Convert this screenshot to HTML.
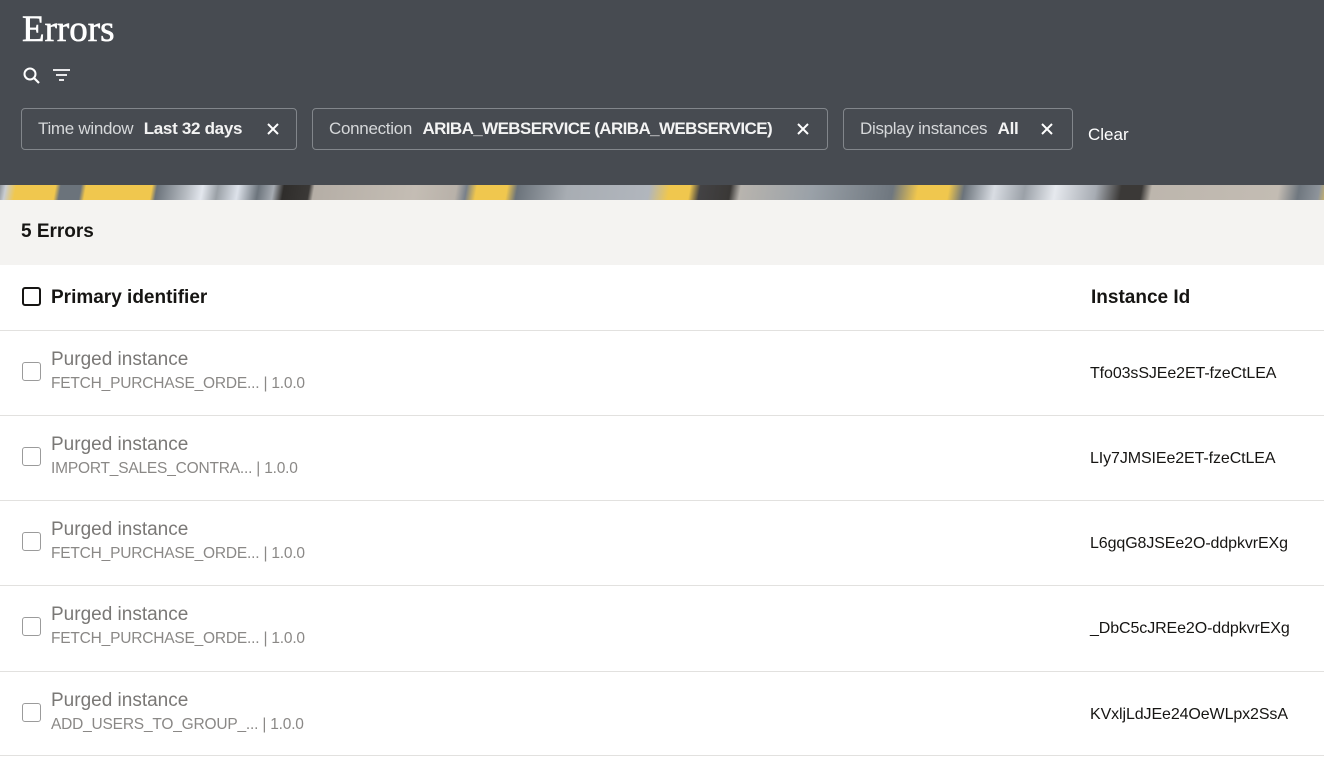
<!DOCTYPE html>
<html><head><meta charset="utf-8"><style>
*{box-sizing:border-box;margin:0;padding:0}
body{width:1324px;height:782px;overflow:hidden;background:#fff;font-family:"Liberation Sans",sans-serif;color:#161513}
.hdr{position:absolute;left:0;top:0;width:1324px;height:185px;background:#474b51}
h1{position:absolute;left:22px;top:8px;font-family:"Liberation Serif",serif;font-weight:normal;font-size:37px;color:#fff;-webkit-text-stroke:0.6px #fff}
.ic{position:absolute;top:66px}
.chip{position:absolute;top:108px;height:42px;border:1px solid #82868b;border-radius:4px;color:#d6d8da;font-size:17px;line-height:40px;padding-left:16px;white-space:nowrap;letter-spacing:-0.3px}
.chip b{color:#f3f3f3;margin-left:6px}
.chip .x{position:absolute;top:12px}
.clear{position:absolute;left:1088px;top:125px;color:#fff;font-size:17px}
.band{position:absolute;left:0;top:185px;width:1324px;height:15px;background:linear-gradient(100deg,#8e949b 0,#c9cdd2 6px,#f0c74e 16px,#f0c74e 55px,#6b737b 60px,#6b737b 80px,#f0c74e 85px,#f0c74e 150px,#6b737b 155px,#b8bdc3 185px,#e3e7ee 200px,#9aa0a6 215px,#dde2ea 235px,#6c747c 255px,#a6abb2 270px,#2f2d2b 280px,#3a3836 305px,#b5aea6 310px,#c4bdb4 410px,#b8b1a9 450px,#78808a 460px,#f0c74e 470px,#f0c74e 500px,#6b737b 510px,#a8adb3 560px,#b1b6bd 640px,#f0c74e 660px,#f0c74e 680px,#434244 690px,#3a3836 720px,#b8b4ae 730px,#9aa1a8 800px,#6f777f 880px,#f0c74e 905px,#f0c74e 935px,#6b737b 950px,#d9dde3 980px,#9ba1a8 1010px,#e6e9ee 1040px,#a7acb3 1080px,#3b3937 1105px,#3b3937 1125px,#bdb6ad 1135px,#c3bcb3 1260px,#6f777f 1280px,#8e949b 1300px,#f0c74e 1312px)}
.sub{position:absolute;left:0;top:200px;width:1324px;height:65px;background:#f4f3f1}
.sub span{position:absolute;left:21px;top:21px;font-size:19px;font-weight:bold}
.th{position:absolute;top:287px;font-size:19px;font-weight:bold}
.cb{position:absolute;left:22px;width:19px;height:19px;border:1.5px solid #9b9b9b;border-radius:3px}
.row{position:absolute;left:0;width:1324px;height:85px;border-top:1px solid #e2e1df}
.row .t{position:absolute;left:51px;top:18px;font-size:19px;color:#7a7876}
.row .s{position:absolute;left:51px;top:44px;font-size:15.5px;color:#8a8886;letter-spacing:-0.2px}
.row .id{position:absolute;left:1090px;top:34px;font-size:16px;color:#161513;letter-spacing:-0.1px}
.row .cb{top:31px}
</style></head><body>
<div class="hdr">
<h1>Errors</h1>
<svg class="ic" style="left:22px" width="20" height="20" viewBox="0 0 20 20"><circle cx="8" cy="8" r="5.5" fill="none" stroke="#fff" stroke-width="2"/><path d="M12 12l5 5" stroke="#fff" stroke-width="2.2"/></svg>
<svg class="ic" style="left:52px" width="20" height="20" viewBox="0 0 20 20"><path d="M1 4h17M4 9h11M7 14h5" stroke="#fff" stroke-width="1.8"/></svg>
<div class="chip" style="left:21px;width:276px">Time window <b>Last 32 days</b><svg class="x" style="left:243px" width="16" height="16"><path d="M3 3l10 10M13 3L3 13" stroke="#fff" stroke-width="2"/></svg></div>
<div class="chip" style="left:312px;width:516px">Connection <b style="letter-spacing:-0.6px">ARIBA_WEBSERVICE (ARIBA_WEBSERVICE)</b><svg class="x" style="left:482px" width="16" height="16"><path d="M3 3l10 10M13 3L3 13" stroke="#fff" stroke-width="2"/></svg></div>
<div class="chip" style="left:843px;width:230px">Display instances <b>All</b><svg class="x" style="left:195px" width="16" height="16"><path d="M3 3l10 10M13 3L3 13" stroke="#fff" stroke-width="2"/></svg></div>
<div class="clear">Clear</div>
</div>
<div class="band"></div>
<div class="sub"><span>5 Errors</span></div>
<div class="cb" style="top:287px;border-color:#161513;border-width:2px"></div>
<div class="th" style="left:51px">Primary identifier</div>
<div class="th" style="left:1091px">Instance Id</div>
<div class="row" style="top:330px"><div class="cb"></div><div class="t">Purged instance</div><div class="s">FETCH_PURCHASE_ORDE... | 1.0.0</div><div class="id">Tfo03sSJEe2ET-fzeCtLEA</div></div>
<div class="row" style="top:415px"><div class="cb"></div><div class="t">Purged instance</div><div class="s">IMPORT_SALES_CONTRA... | 1.0.0</div><div class="id">LIy7JMSIEe2ET-fzeCtLEA</div></div>
<div class="row" style="top:500px"><div class="cb"></div><div class="t">Purged instance</div><div class="s">FETCH_PURCHASE_ORDE... | 1.0.0</div><div class="id">L6gqG8JSEe2O-ddpkvrEXg</div></div>
<div class="row" style="top:585px"><div class="cb"></div><div class="t">Purged instance</div><div class="s">FETCH_PURCHASE_ORDE... | 1.0.0</div><div class="id">_DbC5cJREe2O-ddpkvrEXg</div></div>
<div class="row" style="top:671px;border-bottom:1px solid #e2e1df"><div class="cb"></div><div class="t">Purged instance</div><div class="s">ADD_USERS_TO_GROUP_... | 1.0.0</div><div class="id">KVxljLdJEe24OeWLpx2SsA</div></div>
</body></html>
